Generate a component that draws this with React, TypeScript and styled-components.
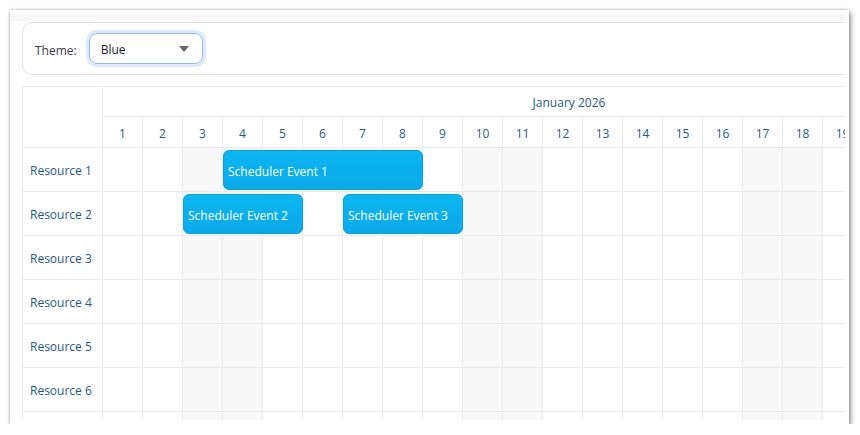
import React from "react";
import styled, { createGlobalStyle } from "styled-components";

const GlobalStyle = createGlobalStyle`
  html, body {
    margin: 0;
    padding: 0;
    background: #ffffff;
  }
  body {
    font-family: "Open Sans", "Noto Sans", Arial, sans-serif;
    font-size: 12px;
  }
  * { box-sizing: border-box; }
`;

const Stage = styled.div`
  padding: 10px 0 0 10px;
`;

const Window = styled.div`
  width: 839px;
  height: 414px;
  background: #ffffff;
  padding: 0 4px 4px 0;
  box-shadow: 0 0 3px rgba(0, 0, 0, 0.28), 2px 3px 5px rgba(0, 0, 0, 0.38);
`;

const Viewport = styled.div`
  width: 835px;
  height: 410px;
  overflow: hidden;
  padding: 12px 0 0 12px;
  background: linear-gradient(#ffffff 0 4px, #f7f7f7 4px 11px, #ffffff 11px);
`;

const Toolbar = styled.div`
  display: flex;
  align-items: center;
  gap: 12px;
  width: 1100px;
  height: 53px;
  padding: 2px 12px 0;
  border: 1px solid #e2e2e2;
  border-radius: 10px;
  background: #ffffff;
  margin-bottom: 11px;
`;

const Label = styled.span`
  font-size: 12px;
  color: #3a3a48;
  margin-top: 1px;
`;

const Select = styled.div`
  display: flex;
  align-items: center;
  justify-content: space-between;
  width: 114px;
  height: 31px;
  margin-top: -2px;
  padding: 2px 13px 0 11px;
  border: 1px solid #8fbcf3;
  border-radius: 8px;
  box-shadow: 0 0 0 3px #dde9fc;
  font-size: 12px;
  color: #1e1e1e;
`;

const Caret = styled.span`
  width: 0;
  height: 0;
  margin-top: -2px;
  border-left: 5.5px solid transparent;
  border-right: 5.5px solid transparent;
  border-top: 6px solid #6a6a6a;
`;

const Scheduler = styled.div`
  width: 1400px;
  border-top: 1px solid #ebebeb;
  border-left: 1px solid #ebebeb;
  color: #1f5a80;
  font-size: 12px;
`;

const HeaderRow = styled.div`
  display: flex;
`;

const Corner = styled.div`
  width: 80px;
  height: 61px;
  border-right: 1px solid #ebebeb;
  border-bottom: 1px solid #ebebeb;
`;

const TimeHeader = styled.div`
  display: flex;
  flex-direction: column;
`;

const MonthRow = styled.div`
  height: 30px;
  width: 1240px;
  padding-top: 2px;
  border-bottom: 1px solid #ebebeb;
  display: flex;
  align-items: center;
`;

const MonthLabel = styled.div`
  width: 932px;
  text-align: center;
`;

const DayRow = styled.div`
  display: flex;
  height: 31px;
  border-bottom: 1px solid #ebebeb;
`;

const DayCell = styled.div`
  width: 40px;
  flex: none;
  padding-top: 2px;
  border-right: 1px solid #ebebeb;
  display: flex;
  align-items: center;
  justify-content: center;
`;

const Row = styled.div`
  display: flex;
  height: 44px;
  border-bottom: 1px solid #ebebeb;
`;

const RowHeader = styled.div`
  width: 80px;
  flex: none;
  border-right: 1px solid #ebebeb;
  display: flex;
  align-items: center;
  padding: 2px 0 0 7px;
`;

const Lane = styled.div`
  position: relative;
  display: flex;
`;

const Cell = styled.div<{ $weekend: boolean }>`
  width: 40px;
  flex: none;
  border-right: 1px solid #ebebeb;
  background: ${(p) => (p.$weekend ? "#f8f8f8" : "#ffffff")};
`;

const EventBox = styled.div`
  position: absolute;
  top: 2px;
  height: 40px;
  display: flex;
  align-items: center;
  padding: 2px 0 0 4px;
  border: 1px solid #0b9fdc;
  border-radius: 6px;
  background: linear-gradient(#0cb6f0, #0aa9e7);
  color: #ffffff;
  font-size: 12px;
  white-space: nowrap;
  overflow: hidden;
`;

type SchedulerEvent = { id: number; text: string; resource: number; start: number; days: number };

const days = Array.from({ length: 31 }, (_, i) => i + 1);
// January 1, 2026 is a Thursday
const isWeekend = (d: number) => {
  const dow = (4 + d - 1) % 7;
  return dow === 6 || dow === 0;
};

const resources = ["Resource 1", "Resource 2", "Resource 3", "Resource 4", "Resource 5", "Resource 6", "Resource 7"];

const events: SchedulerEvent[] = [
  { id: 1, text: "Scheduler Event 1", resource: 0, start: 4, days: 5 },
  { id: 2, text: "Scheduler Event 2", resource: 1, start: 3, days: 3 },
  { id: 3, text: "Scheduler Event 3", resource: 1, start: 7, days: 3 },
];

export default function App() {
  return (
    <>
      <GlobalStyle />
      <Stage>
        <Window>
          <Viewport>
            <Toolbar>
              <Label>Theme:</Label>
              <Select>
                <span>Blue</span>
                <Caret />
              </Select>
            </Toolbar>
            <Scheduler>
              <HeaderRow>
                <Corner />
                <TimeHeader>
                  <MonthRow>
                    <MonthLabel>January 2026</MonthLabel>
                  </MonthRow>
                  <DayRow>
                    {days.map((d) => (
                      <DayCell key={d}>{d}</DayCell>
                    ))}
                  </DayRow>
                </TimeHeader>
              </HeaderRow>
              {resources.map((name, ri) => (
                <Row key={name}>
                  <RowHeader>{name}</RowHeader>
                  <Lane>
                    {days.map((d) => (
                      <Cell key={d} $weekend={isWeekend(d)} />
                    ))}
                    {events
                      .filter((e) => e.resource === ri)
                      .map((e) => (
                        <EventBox
                          key={e.id}
                          style={{ left: (e.start - 1) * 40, width: e.days * 40 }}
                        >
                          {e.text}
                        </EventBox>
                      ))}
                  </Lane>
                </Row>
              ))}
            </Scheduler>
          </Viewport>
        </Window>
      </Stage>
    </>
  );
}
